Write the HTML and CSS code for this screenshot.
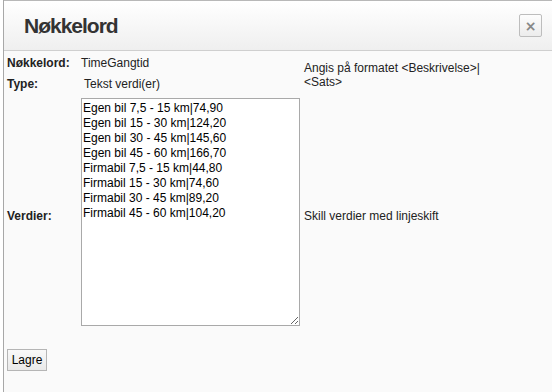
FILE: index.html
```html
<!DOCTYPE html>
<html>
<head>
<meta charset="utf-8">
<link rel="stylesheet" href="styles.css">
</head>
<body>
<div class="page">
  <div class="strip"></div>
  <div class="dialog">
    <div class="header">
      <h1 class="title">Nøkkelord</h1>
      <button class="close" type="button">×</button>
    </div>
    <div class="body">
      <div class="form">
        <div class="label r1">Nøkkelord:</div>
        <div class="value r1">TimeGangtid</div>
        <div class="help top">Angis på formatet &lt;Beskrivelse&gt;|<br>&lt;Sats&gt;</div>
        <div class="label r2">Type:</div>
        <div class="value r2 indent">Tekst verdi(er)</div>
        <div class="label r3 low">Verdier:</div>
        <div class="value r3"><textarea class="values">Egen bil 7,5 - 15 km|74,90
Egen bil 15 - 30 km|124,20
Egen bil 30 - 45 km|145,60
Egen bil 45 - 60 km|166,70
Firmabil 7,5 - 15 km|44,80
Firmabil 15 - 30 km|74,60
Firmabil 30 - 45 km|89,20
Firmabil 45 - 60 km|104,20</textarea></div>
        <div class="help r3 low">Skill verdier med linjeskift</div>
      </div>
      <button class="save" type="button">Lagre</button>
    </div>
  </div>
</div>
</body>
</html>
```
FILE: styles.css
```css
html, body {
  margin: 0;
  padding: 0;
  background: #fff;
}
body {
  font-family: "Liberation Sans", Arial, sans-serif;
  font-size: 12px;
  color: #222;
}
.page {
  display: flex;
  width: 552px;
  height: 392px;
  overflow: hidden;
}
.strip {
  width: 3px;
  flex: none;
  background: #fff;
}
.dialog {
  flex: 1;
  display: flex;
  flex-direction: column;
  border-left: 1px solid #a8a8a8;
  background: #fafafa;
}
.header {
  display: flex;
  align-items: center;
  justify-content: space-between;
  height: 49px;
  padding: 0 10px 0 20px;
  border-top: 1px solid #b8b8b8;
  border-bottom: 1px solid #cfcfcf;
  background: linear-gradient(#ffffff, #efefef);
}
.title {
  margin: 0;
  font-size: 21px;
  line-height: 1;
  font-weight: bold;
  letter-spacing: -1px;
  color: #333;
}
.close {
  width: 23px;
  height: 23px;
  padding: 0;
  border: 1px solid #bdbdbd;
  border-radius: 2px;
  background: linear-gradient(#fdfdfd, #ececec);
  color: #888;
  font-family: "DejaVu Sans", sans-serif;
  font-size: 14px;
  font-weight: bold;
  line-height: 20px;
}
.body {
  flex: 1;
  padding: 5px 0 0 3px;
}
.form {
  display: grid;
  grid-template-columns: 74px 223px 1fr;
  grid-template-rows: 14px 14px 228px;
  row-gap: 7px;
  align-items: center;
}
.label {
  font-weight: bold;
  color: #222;
}
.r1 { grid-row: 1; }
.r2 { grid-row: 2; }
.r3 { grid-row: 3; }
.help.top {
  grid-row: 1 / span 2;
  grid-column: 3;
  line-height: 14px;
  margin-top: 3px;
}
.help.r3 { grid-column: 3; }
.indent { padding-left: 3px; }
.low { margin-top: 8px; }
.values {
  display: block;
  box-sizing: border-box;
  width: 219px;
  height: 228px;
  margin: 0;
  padding: 2px 1px;
  border: 1px solid #a9a9a9;
  background: #fff;
  font-family: "Liberation Sans", Arial, sans-serif;
  font-size: 12px;
  line-height: 15px;
  color: #000;
  overflow: hidden;
}
.save {
  display: block;
  margin-top: 23px;
  height: 22px;
  width: 40px;
  padding: 0;
  border: 1px solid #b5b5b5;
  background: linear-gradient(#f9f9f9, #e9e9e9);
  font-family: "Liberation Sans", Arial, sans-serif;
  font-size: 12px;
  color: #000;
}
```
